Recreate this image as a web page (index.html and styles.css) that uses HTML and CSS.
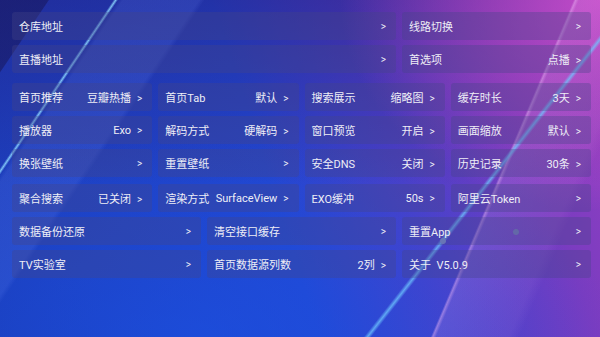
FILE: index.html
```html
<html>
  <head>
    <meta charset="utf-8">
    <link rel="stylesheet" href="styles.css">
  </head>
  <body>
    <div class="screen">
      <div class="row">
        <div class="item span8"><span>仓库地址</span><span class="arrow">&gt;</span></div>
        <div class="item span4"><span>线路切换</span><span class="arrow">&gt;</span></div>
      </div>
      <div class="row">
        <div class="item span8"><span>直播地址</span><span class="arrow">&gt;</span></div>
        <div class="item span4"><span>首选项</span><span>点播<span class="arrow">&gt;</span></span></div>
      </div>

      <div class="row group">
        <div class="item span3"><span>首页推荐</span><span>豆瓣热播<span class="arrow">&gt;</span></span></div>
        <div class="item span3"><span>首页Tab</span><span>默认<span class="arrow">&gt;</span></span></div>
        <div class="item span3"><span>搜索展示</span><span>缩略图<span class="arrow">&gt;</span></span></div>
        <div class="item span3"><span>缓存时长</span><span>3天<span class="arrow">&gt;</span></span></div>
      </div>
      <div class="row">
        <div class="item span3"><span>播放器</span><span>Exo<span class="arrow">&gt;</span></span></div>
        <div class="item span3"><span>解码方式</span><span>硬解码<span class="arrow">&gt;</span></span></div>
        <div class="item span3"><span>窗口预览</span><span>开启<span class="arrow">&gt;</span></span></div>
        <div class="item span3"><span>画面缩放</span><span>默认<span class="arrow">&gt;</span></span></div>
      </div>
      <div class="row">
        <div class="item span3"><span>换张壁纸</span><span class="arrow">&gt;</span></div>
        <div class="item span3"><span>重置壁纸</span><span class="arrow">&gt;</span></div>
        <div class="item span3"><span>安全DNS</span><span>关闭<span class="arrow">&gt;</span></span></div>
        <div class="item span3"><span>历史记录</span><span>30条<span class="arrow">&gt;</span></span></div>
      </div>
      <div class="row gap">
        <div class="item span3"><span>聚合搜索</span><span>已关闭<span class="arrow">&gt;</span></span></div>
        <div class="item span3"><span>渲染方式</span><span>SurfaceView<span class="arrow">&gt;</span></span></div>
        <div class="item span3"><span>EXO缓冲</span><span>50s<span class="arrow">&gt;</span></span></div>
        <div class="item span3"><span>阿里云Token</span><span class="arrow">&gt;</span></div>
      </div>

      <div class="row">
        <div class="item span4"><span>数据备份还原</span><span class="arrow">&gt;</span></div>
        <div class="item span4"><span>清空接口缓存</span><span class="arrow">&gt;</span></div>
        <div class="item span4"><span>重置App</span><span class="arrow">&gt;</span></div>
      </div>
      <div class="row">
        <div class="item span4"><span>TV实验室</span><span class="arrow">&gt;</span></div>
        <div class="item span4"><span>首页数据源列数</span><span>2列<span class="arrow">&gt;</span></span></div>
        <div class="item span4"><span>关于&nbsp; V5.0.9</span><span class="arrow">&gt;</span></div>
      </div>
    </div>
  </body>
</html>
```

FILE: styles.css
```css
body {
  margin: 0;
  font-family: Roboto, "Noto Sans CJK SC", sans-serif;
}

/* whole tv screen with the wallpaper */
.screen {
  width: 600px;
  height: 337px;
  box-sizing: border-box;
  padding: 12px 9px 0 12px;
  display: flex;
  flex-direction: column;
  gap: 5px;
  overflow: hidden;
  background:
    radial-gradient(circle at 443px 241px, rgba(125,145,205,0.95) 2.5px, transparent 3.5px),
    radial-gradient(circle at 516px 232px, rgba(115,125,185,0.95) 2.5px, transparent 3.5px),
    linear-gradient(124deg, transparent 94px, rgba(140,215,255,0.85) 96px, transparent 98px),
    linear-gradient(124deg, transparent 98px, rgba(120,150,255,0.14) 102px, rgba(120,150,255,0.14) 165px, transparent 170px),
    linear-gradient(128deg, transparent 494px, rgba(110,200,255,0.75) 497px, transparent 500px),
    linear-gradient(124deg, rgba(22,16,75,0.45) 40px, transparent 41px),
    linear-gradient(113deg, transparent 528px, rgba(235,180,245,0.5) 530px, rgba(235,170,240,0.16) 533px, rgba(235,170,240,0.08) 600px, transparent 610px),
    radial-gradient(ellipse 260px 210px at 600px 0, rgba(225,85,215,0.75), transparent),
    radial-gradient(ellipse 420px 200px at 200px 337px, rgba(25,85,235,0.5), transparent),
    linear-gradient(180deg, rgba(35,20,105,0.4), rgba(35,20,105,0) 55%),
    linear-gradient(72deg, #1c3cb8 0%, #2246d0 45%, #4a40c8 64%, #7a3cc0 84%, #9640c2 100%);
}

.row {
  display: grid;
  grid-template-columns: repeat(12, 1fr);
  column-gap: 6px;
}

.row.group {
  margin-top: 5px;
}

.row.gap {
  margin-top: 2px;
}

.span3 { grid-column: span 3; }
.span4 { grid-column: span 4; }
.span8 { grid-column: span 8; }

/* one setting button */
.item {
  height: 28px;
  display: flex;
  align-items: center;
  justify-content: space-between;
  padding: 0 10px 0 7px;
  border-radius: 3px;
  background-color: rgba(70,70,135,0.35);
  color: #eeeef6;
  font-size: 11px;
  white-space: nowrap;
}

.arrow {
  margin-left: 6px;
  font-size: 10px;
}
```
